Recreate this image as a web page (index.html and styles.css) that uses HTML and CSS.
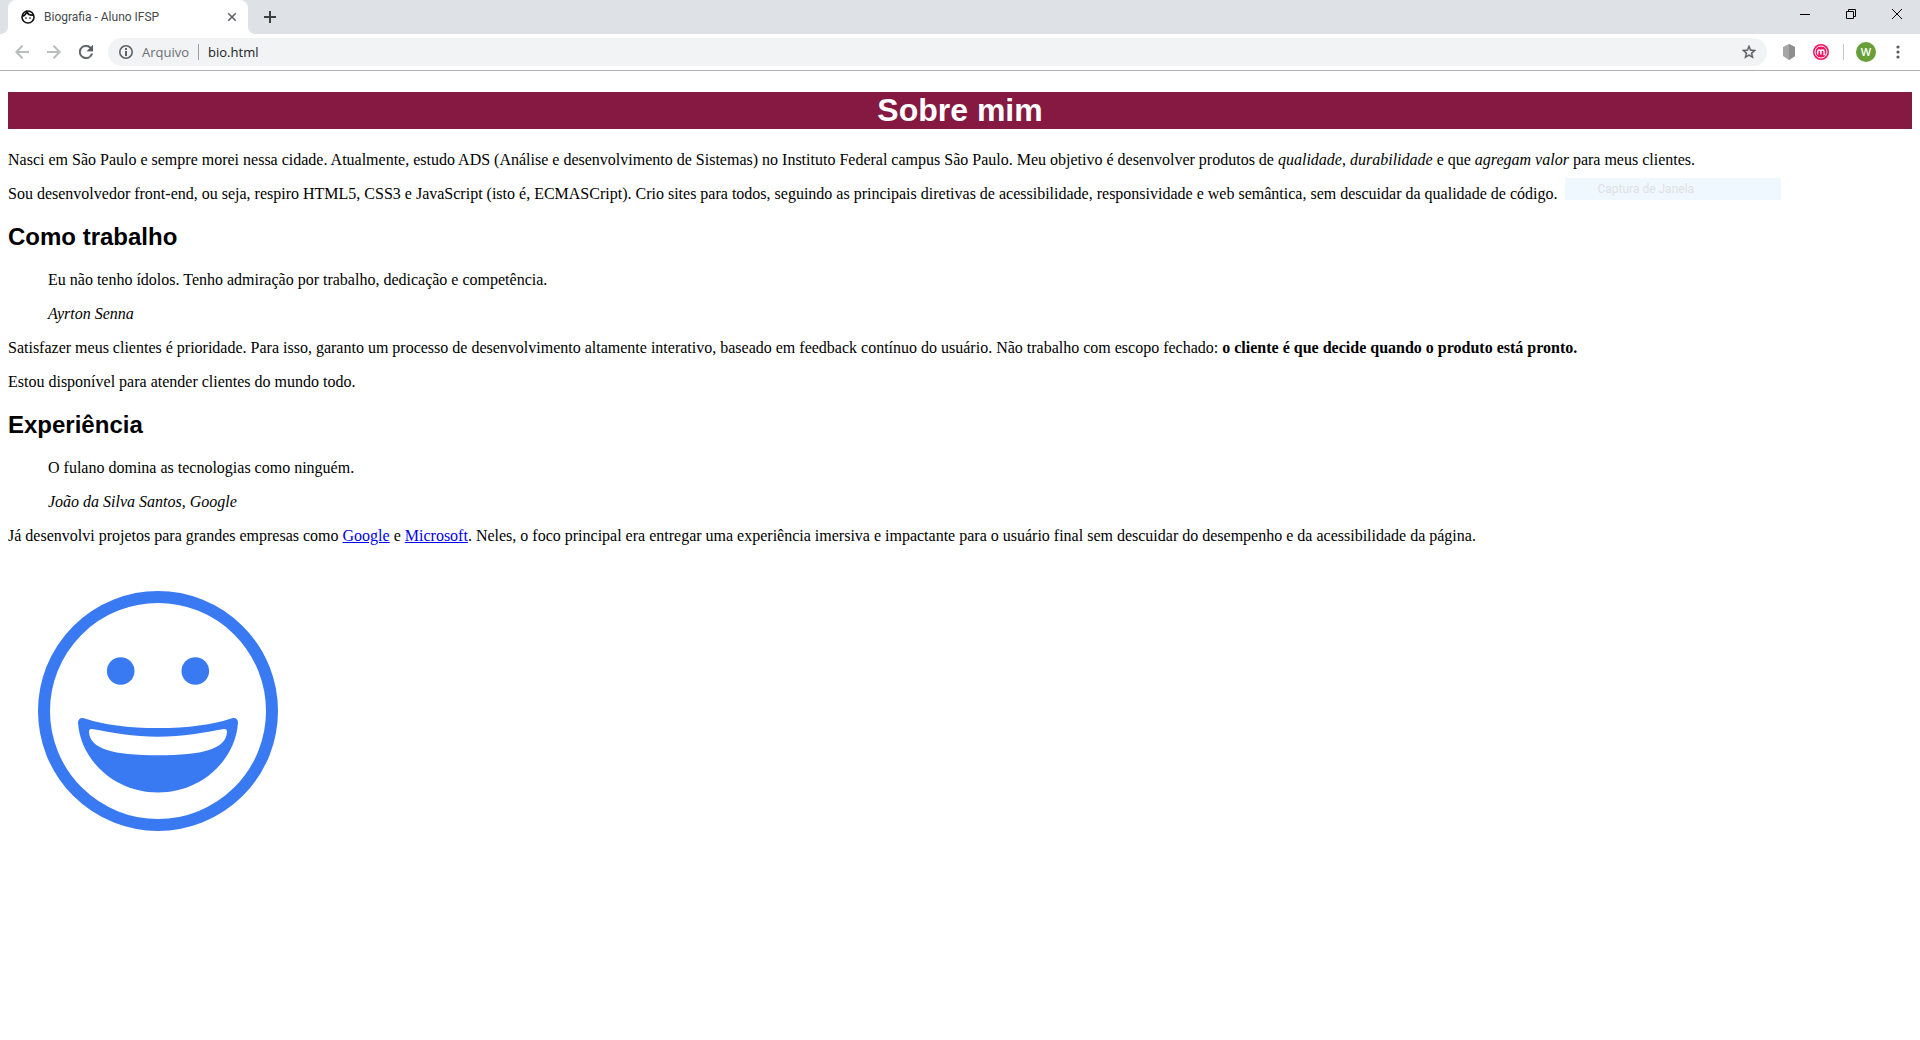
FILE: index.html
```html
<!DOCTYPE html>
<html lang="pt-BR">
<head>
<meta charset="utf-8">
<title>Biografia - Aluno IFSP</title>
<link rel="stylesheet" href="styles.css">
</head>
<body>
<header class="browser">
  <div class="tab-strip">
    <div class="tab">
      <svg class="tab-icon" viewBox="0 0 24 24" aria-hidden="true"><circle cx="12" cy="12" r="9" fill="none" stroke="#111" stroke-width="2.400"/><path d="M3.500 11Q8.500 9.500 10 4.500Q13 10 20.500 9" fill="none" stroke="#111" stroke-width="2.400"/><circle cx="9" cy="13.500" r="1.300" fill="#111"/><circle cx="15" cy="13.500" r="1.300" fill="#111"/></svg>
      <span class="tab-title">Biografia - Aluno IFSP</span>
      <button class="icon-button tab-close" aria-label="Fechar guia"><svg width="10" height="10" viewBox="0 0 10 10"><path d="M1.200 1.200l7.600 7.600M8.800 1.200L1.200 8.800" stroke="#5f6368" stroke-width="1.600"/></svg></button>
    </div>
    <button class="icon-button new-tab" aria-label="Nova guia"><svg width="12" height="12" viewBox="0 0 12 12"><path d="M6 0v12M0 6h12" stroke="#3c4043" stroke-width="2"/></svg></button>
    <div class="window-controls">
      <button class="icon-button" aria-label="Minimizar"><svg width="10" height="10" viewBox="0 0 10 10"><path d="M0 5.500h10" stroke="#000"/></svg></button>
      <button class="icon-button" aria-label="Restaurar"><svg width="10" height="10" viewBox="0 0 10 10"><path d="M.5 2.500h7v7h-7zM2.500 2.500v-2h7v7h-2" fill="none" stroke="#000"/></svg></button>
      <button class="icon-button" aria-label="Fechar"><svg width="10" height="10" viewBox="0 0 10 10"><path d="M0 0l10 10M10 0L0 10" stroke="#000"/></svg></button>
    </div>
  </div>
  <div class="toolbar">
    <button class="icon-button nav" aria-label="Voltar"><svg width="14" height="14" viewBox="0 0 14 14"><path d="M14 7H1.500M7.500.8L1.300 7l6.200 6.200" fill="none" stroke="#babcbe" stroke-width="2"/></svg></button>
    <button class="icon-button nav" aria-label="Avançar"><svg width="14" height="14" viewBox="0 0 14 14"><path d="M0 7h12.500M6.500.8L12.700 7l-6.200 6.200" fill="none" stroke="#babcbe" stroke-width="2"/></svg></button>
    <button class="icon-button nav" aria-label="Recarregar"><svg width="14" height="14" viewBox="4 4 16 16"><path fill="#5a5e63" stroke="#5a5e63" stroke-width=".4" d="M17.650 6.350A8 8 0 1 0 19.730 14h-2.080A6 6 0 1 1 12 6c1.660 0 3.140.690 4.220 1.780L13 11h7V4z"/></svg></button>
    <div class="address">
      <svg width="14" height="14" viewBox="0 0 14 14" aria-hidden="true"><circle cx="7" cy="7" r="6.200" fill="none" stroke="#5f6368" stroke-width="1.600"/><path d="M7 3v2M7 6v5" stroke="#5f6368" stroke-width="2"/></svg>
      <span class="scheme">Arquivo</span>
      <input class="url" type="text" value="bio.html" aria-label="Endereço">
      <button class="icon-button" aria-label="Favoritar"><svg width="14" height="14" viewBox="2 2 20 20"><path fill="#5a5e63" stroke="#5a5e63" stroke-width=".6" d="M22 9.240l-7.190-.620L12 2 9.190 8.630 2 9.240l5.460 4.730L5.820 21 12 17.270 18.180 21l-1.630-7.030zM12 15.400l-3.760 2.270 1-4.280-3.320-2.880 4.380-.380L12 6.100l1.710 4.040 4.380.380-3.320 2.880 1 4.280z"/></svg></button>
    </div>
    <div class="extensions">
      <button class="icon-button shield" aria-label="Proteção"><svg width="12" height="16" viewBox="0 0 12 16"><path d="M6 0l6 3v9l-6 4-6-4V3z" fill="#a6a6a6"/><path d="M6 0l6 3v9l-6 4z" fill="#8e8e8e"/></svg></button>
      <button class="icon-button" aria-label="Extensão M"><svg width="16" height="16" viewBox="0 0 16 16"><circle cx="8" cy="8" r="8" fill="#f5145f"/><circle cx="8" cy="8" r="6" fill="none" stroke="#fff"/><path d="M4.700 10.500V7.700q0-1.700 1.600-1.700t1.600 1.700v2.800M7.900 7.700Q7.900 6 9.500 6t1.600 1.700v2.800h1.500" fill="none" stroke="#fff" stroke-width="1.500"/></svg></button>
      <span class="divider"></span>
      <button class="icon-button avatar" aria-label="Perfil">W</button>
      <button class="icon-button menu" aria-label="Menu"><svg width="4" height="14" viewBox="0 0 4 14"><g fill="#5a5e63"><circle cx="2" cy="2" r="1.600"/><circle cx="2" cy="7" r="1.600"/><circle cx="2" cy="12" r="1.600"/></g></svg></button>
    </div>
  </div>
</header>
<main class="page">
  <h1>Sobre mim</h1>
  <p>Nasci em São Paulo e sempre morei nessa cidade. Atualmente, estudo ADS (Análise e desenvolvimento de Sistemas) no Instituto Federal campus São Paulo. Meu objetivo é desenvolver produtos de <em>qualidade</em>, <em>durabilidade</em> e que <em>agregam valor</em> para meus clientes.</p>
  <p>Sou desenvolvedor front-end, ou seja, respiro HTML5, CSS3 e JavaScript (isto é, ECMASCript). Crio sites para todos, seguindo as principais diretivas de acessibilidade, responsividade e web semântica, sem descuidar da qualidade de <span class="anchor">código.<span class="capture">Captura de Janela</span></span></p>
  <h2>Como trabalho</h2>
  <blockquote>
    <p>Eu não tenho ídolos. Tenho admiração por trabalho, dedicação e competência.</p>
    <cite>Ayrton Senna</cite>
  </blockquote>
  <p>Satisfazer meus clientes é prioridade. Para isso, garanto um processo de desenvolvimento altamente interativo, baseado em feedback contínuo do usuário. Não trabalho com escopo fechado: <strong>o cliente é que decide quando o produto está pronto.</strong></p>
  <p>Estou disponível para atender clientes do mundo todo.</p>
  <h2>Experiência</h2>
  <blockquote>
    <p>O fulano domina as tecnologias como ninguém.</p>
    <cite>João da Silva Santos, Google</cite>
  </blockquote>
  <p>Já desenvolvi projetos para grandes empresas como <a href="#google">Google</a> e <a href="#microsoft">Microsoft</a>. Neles, o foco principal era entregar uma experiência imersiva e impactante para o usuário final sem descuidar do desempenho e da acessibilidade da página.</p>
  <svg class="smiley" viewBox="0 0 300 300" role="img" aria-label="Rosto sorridente">
    <circle cx="150" cy="150" r="114" fill="none" stroke="#397af3" stroke-width="12"/>
    <circle cx="112.700" cy="110" r="13.800" fill="#397af3"/>
    <circle cx="187.300" cy="110" r="13.800" fill="#397af3"/>
    <path fill="#397af3" fill-rule="evenodd" d="M76 157.200Q105 167 150 167T224 157.200C227.500 156 230.300 158.500 230 162C227 200 193 231.500 150 231.500S73 200 70 162C69.700 158.500 72.500 156 76 157.200ZM84 168Q81 167.500 81 171C82 188 105 194.300 150 194.300S218 188 219 171Q219 167.500 216 168C196 171.500 175 175.800 150 175.800S104 171.500 84 168Z"/>
  </svg>
</main>
</body>
</html>
```

FILE: styles.css
```css
body {
  margin: 0;
  background: #fff;
  color: #000;
  font: 16px/18px "Liberation Serif", "Times New Roman", serif;
}

.browser {
  font: 12px/16px "Open Sans", sans-serif;
  border-bottom: 1px solid #b1b1b3;
}

.icon-button {
  display: flex;
  align-items: center;
  justify-content: center;
  flex: none;
  border: 0;
  padding: 0;
  background: none;
  font: inherit;
}

.tab-strip {
  display: flex;
  height: 34px;
  padding-left: 8px;
  background: #dee1e6;
}

.tab {
  position: relative;
  display: flex;
  align-items: center;
  box-sizing: border-box;
  width: 240px;
  padding: 0 11px 0 12px;
  border-radius: 8px 8px 0 0;
  background: #fff;
}

.tab::before,
.tab::after {
  content: "";
  position: absolute;
  bottom: 0;
  width: 8px;
  height: 8px;
}

.tab::before {
  right: 100%;
  background: radial-gradient(circle at 0 0, #dee1e6 8px, #fff 8px);
}

.tab::after {
  left: 100%;
  background: radial-gradient(circle at 100% 0, #dee1e6 8px, #fff 8px);
}

.tab-icon {
  width: 16px;
  height: 16px;
}

.tab-title {
  flex: 1;
  margin-left: 8px;
  color: #45494d;
  font-family: Roboto, sans-serif;
}

.tab-close {
  width: 10px;
}

.new-tab {
  width: 44px;
}

.window-controls {
  display: flex;
  height: 28px;
  margin-left: auto;
}

.window-controls .icon-button {
  width: 46px;
}

.toolbar {
  display: flex;
  align-items: center;
  height: 36px;
  padding: 0 8px 0 6px;
}

.nav {
  width: 32px;
  height: 28px;
}

.address {
  display: flex;
  flex: 1;
  align-items: center;
  height: 28px;
  margin-left: 6px;
  padding: 0 11px;
  border-radius: 14px;
  background: #f1f3f4;
  font-size: 13px;
}

.scheme {
  margin-left: 9px;
  padding-right: 9px;
  border-right: 1px solid #9aa0a6;
  color: #6b6f74;
}

.url {
  flex: 1;
  min-width: 0;
  margin-left: 9px;
  padding: 0;
  border: 0;
  outline: 0;
  background: none;
  color: #202124;
  font: inherit;
}

.extensions {
  display: flex;
  align-items: center;
}

.shield {
  margin: 0 18px 0 16px;
}

.divider {
  width: 1px;
  height: 16px;
  margin: 0 12px 0 14px;
  background: #c6c8ca;
}

.avatar {
  width: 20px;
  height: 20px;
  border-radius: 50%;
  background: #689f38;
  color: #fff;
  font-size: 11px;
  font-weight: 600;
}

.menu {
  width: 44px;
  margin-right: -8px;
}

.page {
  padding: 21px 8px 16px;
}

h1,
h2 {
  font-family: "Liberation Sans", Arial, sans-serif;
  font-weight: bold;
}

h1 {
  margin: 0 0 22px;
  background: #851942;
  color: #fff;
  font-size: 32px;
  line-height: 37px;
  text-align: center;
}

h2 {
  margin: 20px 0 21px;
  font-size: 24px;
  line-height: 27px;
}

p {
  margin: 16px 0;
}

blockquote {
  margin: 16px 40px;
}

.anchor {
  position: relative;
}

.capture {
  position: absolute;
  top: -7px;
  left: calc(100% + 8px);
  box-sizing: border-box;
  width: 216px;
  padding-left: 32px;
  background: #f0f8ff;
  color: #dedfe3;
  font: 12px/22px Roboto, sans-serif;
  white-space: nowrap;
}

.smiley {
  display: block;
  width: 300px;
  height: 300px;
}
```
